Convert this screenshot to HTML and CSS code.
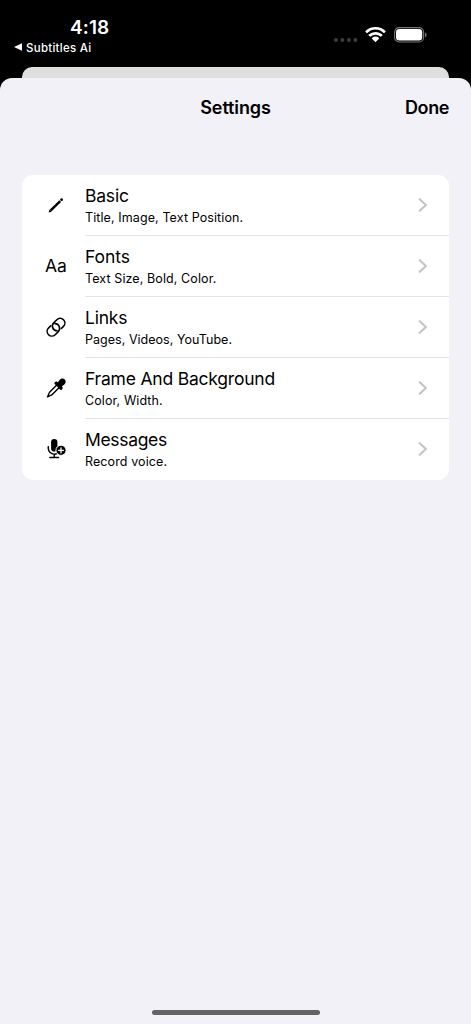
FILE: index.html
```html
<!DOCTYPE html>
<html lang="en">
<head>
<meta charset="utf-8">
<title>Settings</title>
<link rel="stylesheet" href="styles.css">
</head>
<body>
<div class="screen">
  <header class="status">
    <div class="status-left">
      <div class="time">4:18</div>
      <div class="back"><svg class="back-arrow" viewBox="0 0 8 8"><path d="M0 4L8 .3V7.7Z"/></svg><span class="back-label">Subtitles Ai</span></div>
    </div>
    <div class="status-right">
      <svg class="dots" viewBox="0 0 24 4"><circle cx="2" cy="2" r="2"/><circle cx="8.4" cy="2" r="2"/><circle cx="14.9" cy="2" r="2"/><circle cx="21.4" cy="2" r="2"/></svg>
      <svg class="wifi" viewBox="0 0 21 15"><path d="M10.5 0C14.5 0 18 1.500 20.500 3.900q.4.400 0 .8L19.300 5.900q-.35.350-.7 0C16.300 3.800 13.500 2.600 10.500 2.600S4.700 3.800 2.400 5.900q-.35.350-.7 0L.5 4.700q-.4-.4 0-.8C3 1.500 6.500 0 10.500 0Z"/><path d="M10.500 4.900c2.600 0 5 1 6.800 2.700q.4.400 0 .8L16 9.600q-.35.350-.7 0a7 7 0 0 0-9.600 0q-.35.350-.7 0L3.700 8.400q-.4-.4 0-.8A9.900 9.900 0 0 1 10.500 4.900Z"/><path d="M10.500 9.600c1.300 0 2.500.5 3.500 1.300q.4.400 0 .8L10.900 14.700q-.4.400-.8 0L7 11.700q-.4-.4 0-.8a5.400 5.400 0 0 1 3.500-1.300Z"/></svg>
      <svg class="battery" viewBox="0 0 33 16"><rect class="battery-shell" x=".6" y=".6" width="29" height="14.400" rx="4.500"/><rect x="2" y="2" width="26.200" height="11.600" rx="3.300"/><path class="battery-cap" d="M31 5.400q1.700.8 1.700 2.400T31 10.200Z"/></svg>
    </div>
  </header>
  <div class="under-sheet"></div>
  <main class="sheet">
    <nav class="bar"><h1 class="title">Settings</h1><div class="done">Done</div></nav>
    <div class="list">
      <div class="row">
        <svg class="icon" viewBox="0 0 32 32"><path class="pencil" d="M10.500 21.700L20.200 12.200"/><path d="M8.700 23.500l.7-2.700 2.200 2Z"/><circle cx="21.600" cy="10.700" r="1.400"/></svg>
        <div class="text"><div class="name">Basic</div><div class="detail">Title, Image, Text Position.</div></div>
        <svg class="chevron" viewBox="0 0 10 16"><path d="M1.700 2.200L7.900 8l-6.200 5.800"/></svg>
      </div>
      <div class="row">
        <div class="icon letters"><span>Aa</span></div>
        <div class="text"><div class="name name-fonts">Fonts</div><div class="detail">Text Size, Bold, Color.</div></div>
        <svg class="chevron" viewBox="0 0 10 16"><path d="M1.700 2.200L7.900 8l-6.200 5.800"/></svg>
      </div>
      <div class="row">
        <svg class="icon" viewBox="0 0 32 32"><g class="link" transform="rotate(-45 16 16.200)"><path d="M13.200 11.500H10.100a4.700 4.700 0 0 0 0 9.400h4.400a4.700 4.700 0 0 0 3.300-8"/><path d="M18.800 20.900h3.100a4.700 4.700 0 0 0 0-9.400h-4.400a4.700 4.700 0 0 0-3.300 8"/></g></svg>
        <div class="text"><div class="name">Links</div><div class="detail detail-links">Pages, Videos, YouTube.</div></div>
        <svg class="chevron" viewBox="0 0 10 16"><path d="M1.700 2.200L7.900 8l-6.200 5.800"/></svg>
      </div>
      <div class="row">
        <svg class="icon" viewBox="0 0 32 32"><path class="stem" d="M17 12.700L10 19.700Q8.900 20.800 8.700 22.300L7.500 24.900 10.100 23.600Q11.500 23.400 12.500 22.300L19.500 15.200"/><path d="M15 10.100q1.100-1.100 2.200-.3l.7.500 1.900-2.500c1.300-1.500 3.700-1.700 5-.4s1.100 3.700-.4 5l-2.500 1.900.5.700q.8 1.100-.3 2.200l-.6.600q-.6.500-1.200-.1L14.700 12.100q-.6-.6-.1-1.200Z"/></svg>
        <div class="text"><div class="name">Frame And Background</div><div class="detail">Color, Width.</div></div>
        <svg class="chevron" viewBox="0 0 10 16"><path d="M1.700 2.200L7.900 8l-6.200 5.800"/></svg>
      </div>
      <div class="row">
        <svg class="icon" viewBox="0 0 32 32"><rect x="11.100" y="6" width="6.300" height="12.600" rx="3.150"/><path class="stand" d="M8.300 13.700v1.800a5.900 5.900 0 0 0 6 5.700q1.500 0 2.500-.6M14.300 21.200v3.200M9.900 24.400h8.600"/><circle class="plus-disc" cx="21" cy="17.300" r="5.100"/><path class="plus" d="M18.500 17.300h5M21 14.800v5"/></svg>
        <div class="text"><div class="name name-messages">Messages</div><div class="detail">Record voice.</div></div>
        <svg class="chevron" viewBox="0 0 10 16"><path d="M1.700 2.200L7.900 8l-6.200 5.800"/></svg>
      </div>
    </div>
    <div class="home"></div>
  </main>
</div>
</body>
</html>
```
FILE: styles.css
```css
* { box-sizing: border-box; }
body { margin: 0; font-family: Inter, "Liberation Sans", sans-serif; color: #000; }
.screen { width: 471px; height: 1024px; background: #000; display: flex; flex-direction: column; overflow: hidden; }
.status { height: 67px; flex: none; display: flex; justify-content: space-between; color: #fff; }
.status-left { padding: 16px 0 0 14px; }
.time { font-size: 19px; line-height: 23px; font-weight: 600; padding-left: 56px; letter-spacing: .1px; }
.back { display: flex; align-items: center; gap: 4px; height: 16px; font-size: 11.5px; font-weight: 500; letter-spacing: .27px; }
.back-arrow { width: 8px; height: 8px; fill: #fff; }
.back-label { line-height: 14px; padding-top: 2px; }
.status-right { display: flex; align-items: flex-start; padding: 27px 44px 0 0; fill: #fff; }
.dots { width: 24px; height: 4px; margin: 11px 7px 0 0; fill: #3b3b3b; }
.wifi { width: 21px; height: 15px; margin-right: 8px; }
.battery { width: 33px; height: 16px; }
.battery-shell { fill: none; stroke: #777; stroke-width: 1.1; }
.battery-cap { fill: #777; }
.under-sheet { height: 11px; flex: none; margin: 0 22px; background: #dfdfdf; border-radius: 10px 10px 0 0; }
.sheet { flex: 1; display: flex; flex-direction: column; background: #f2f1f7; border-radius: 12px 12px 0 0; }
.bar { height: 58px; margin: 0 22px; display: grid; grid-template-columns: 1fr auto 1fr; align-items: center; font-size: 18px; font-weight: 600; }
.title { grid-column: 2; margin: 0; font-size: inherit; font-weight: inherit; letter-spacing: -.12px; }
.done { justify-self: end; letter-spacing: -.4px; }
.list { margin: 39px 22px 0; background: #fff; border-radius: 11px; overflow: hidden; }
.row { height: 61px; padding-left: 18px; display: flex; align-items: flex-start; }
.icon { width: 32px; height: 32px; flex: none; margin: 14px 13px 0 0; }
.letters { display: flex; align-items: center; justify-content: center; font-size: 17.5px; line-height: 22px; padding-bottom: 1px; }
.text { flex: 1; height: 61px; padding-top: 10px; border-bottom: 1px solid #e3e3e5; margin-right: -40px; white-space: nowrap; }
.row:last-child .text { border-bottom: 0; }
.name { font-size: 17.5px; line-height: 22px; letter-spacing: -.21px; }
.name-fonts { letter-spacing: -.08px; }
.name-messages { letter-spacing: -.33px; }
.detail { font-size: 12.5px; line-height: 22px; letter-spacing: .1px; }
.detail-links { letter-spacing: .03px; }
.chevron { width: 10px; height: 16px; margin: 22px 21px 0 9px; fill: none; stroke: #c4c4c6; stroke-width: 2.1; stroke-linecap: round; stroke-linejoin: round; }
.pencil { fill: none; stroke: #000; stroke-width: 2.5; }
.link { fill: none; stroke: #000; stroke-width: 1.6; stroke-linecap: round; }
.stem { fill: none; stroke: #000; stroke-width: 1.4; stroke-linejoin: round; }
.stand { fill: none; stroke: #000; stroke-width: 1.5; stroke-linecap: round; }
.plus-disc { stroke: #fff; stroke-width: 1; }
.plus { fill: none; stroke: #fff; stroke-width: 1.3; stroke-linecap: round; }
.home { width: 168px; height: 5px; margin: auto auto 9px; border-radius: 3px; background: #626364; }
```
